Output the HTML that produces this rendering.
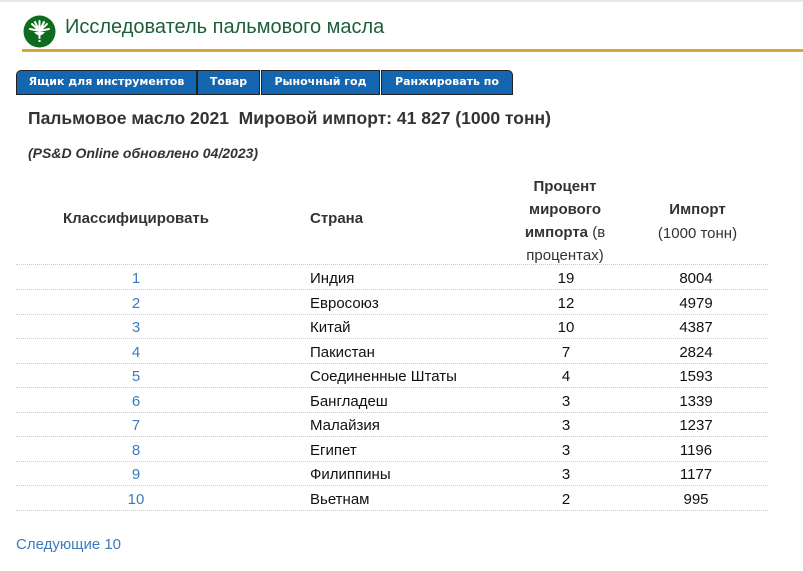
<!DOCTYPE html>
<html><head><meta charset="utf-8"><style>
body{margin:0;width:803px;height:571px;background:#fff;font-family:"Liberation Sans",Arial,sans-serif;position:relative;overflow:hidden;color:#333}
.a{position:absolute;white-space:nowrap}
.tab{position:absolute;top:70px;height:23px;background:#1466b0;border:1px solid #222;color:#fff;font:bold 11px "DejaVu Sans",Verdana,sans-serif;line-height:22px;text-align:center}
.th{font-weight:bold;font-size:15px;color:#333;text-align:center}
.row{position:absolute;left:16px;width:752px;height:24px;border-bottom:1px dotted #ccc;font-size:15px;color:#111}
.row span{position:absolute;top:5px}
.r{color:#3a7bc0;width:240px;text-align:center;left:0}
.c{left:294px}
.p{left:500px;width:100px;text-align:center}
.i{left:630px;width:100px;text-align:center}
</style></head><body>
<div class="a" style="left:0;top:0;width:803px;height:2px;background:#e8e8e8"></div>
<svg class="a" style="left:23px;top:15px" width="33" height="33" viewBox="0 0 33 33">
<circle cx="16.5" cy="16.5" r="16" fill="#0f6b1e"/>
<g stroke="#fff" stroke-width="2" fill="none" stroke-linecap="round">
<path d="M16.5 16 L9 9 M16.5 16 L12 7 M16.5 16 L16.5 6 M16.5 16 L21 7 M16.5 16 L24 9 M16.5 16 L7 14 M16.5 16 L26 14"/>
<path d="M16.5 16 L16.5 23"/>
</g>
<path d="M11 17 Q16.5 24 22 17 Z" fill="#fff"/>
<rect x="15.5" y="25" width="2" height="2" fill="#fff"/>
</svg>
<div class="a" style="left:65px;top:16px;font-size:20px;color:#1d5e3b">Исследователь пальмового масла</div>
<div class="a" style="left:22px;top:49px;width:781px;height:3px;background:#d4a92d"></div>
<div class="tab" style="left:16px;width:179px;border-radius:5px 0 0 0">Ящик для инструментов</div>
<div class="tab" style="left:197px;width:61px">Товар</div>
<div class="tab" style="left:261px;width:117px">Рыночный год</div>
<div class="tab" style="left:381px;width:130px;border-radius:0 5px 0 0">Ранжировать по</div>
<div class="a" style="left:28px;top:108px;font-size:17.5px;font-weight:bold;color:#333">Пальмовое масло 2021&nbsp; Мировой импорт: 41 827 (1000 тонн)</div>
<div class="a" style="left:28px;top:145px;font-size:14px;font-weight:bold;font-style:italic;color:#333">(PS&amp;D Online обновлено 04/2023)</div>
<div class="a th" style="left:16px;width:240px;top:210px">Классифицировать</div>
<div class="a th" style="left:310px;top:210px">Страна</div>
<div class="a th" style="left:490px;width:150px;top:175px;line-height:23px;white-space:normal">Процент<br>мирового<br>импорта <span style="font-weight:normal">(в</span><br><span style="font-weight:normal">процентах)</span></div>
<div class="a th" style="left:640px;width:115px;top:198px;line-height:24px">Импорт<br><span style="font-weight:normal">(1000 тонн)</span></div>
<div class="a" style="left:16px;top:264px;width:752px;border-top:1px dotted #ccc"></div>
<div class="row" style="top:265px"><span class="r">1</span><span class="c">Индия</span><span class="p">19</span><span class="i">8004</span></div>
<div class="row" style="top:289.5px"><span class="r">2</span><span class="c">Евросоюз</span><span class="p">12</span><span class="i">4979</span></div>
<div class="row" style="top:314px"><span class="r">3</span><span class="c">Китай</span><span class="p">10</span><span class="i">4387</span></div>
<div class="row" style="top:338.5px"><span class="r">4</span><span class="c">Пакистан</span><span class="p">7</span><span class="i">2824</span></div>
<div class="row" style="top:363px"><span class="r">5</span><span class="c">Соединенные Штаты</span><span class="p">4</span><span class="i">1593</span></div>
<div class="row" style="top:387.5px"><span class="r">6</span><span class="c">Бангладеш</span><span class="p">3</span><span class="i">1339</span></div>
<div class="row" style="top:412px"><span class="r">7</span><span class="c">Малайзия</span><span class="p">3</span><span class="i">1237</span></div>
<div class="row" style="top:436.5px"><span class="r">8</span><span class="c">Египет</span><span class="p">3</span><span class="i">1196</span></div>
<div class="row" style="top:461px"><span class="r">9</span><span class="c">Филиппины</span><span class="p">3</span><span class="i">1177</span></div>
<div class="row" style="top:485.5px"><span class="r">10</span><span class="c">Вьетнам</span><span class="p">2</span><span class="i">995</span></div>
<div class="a" style="left:16px;top:536px;font-size:15px;color:#3a7bc0">Следующие 10</div>
</body></html>
